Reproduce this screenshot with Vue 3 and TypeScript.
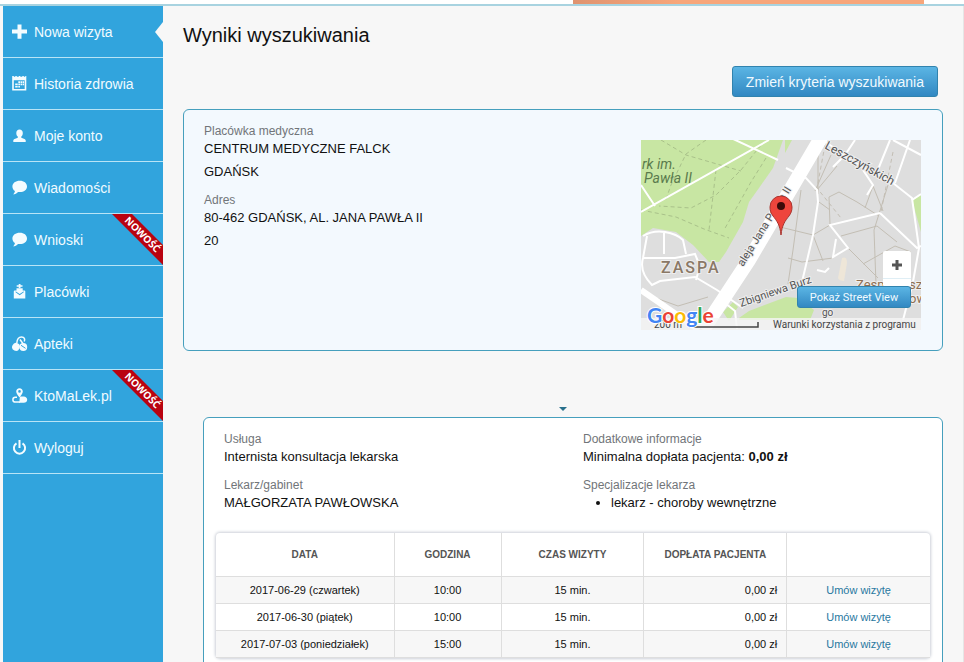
<script setup lang="ts">
interface MenuItem {
  label: string
  icon: string
  active?: boolean
  fresh?: boolean
}

interface Visit {
  date: string
  time: string
  length: string
  price: string
}

const menu: MenuItem[] = [
  { label: 'Nowa wizyta', icon: 'plus', active: true },
  { label: 'Historia zdrowia', icon: 'calendar' },
  { label: 'Moje konto', icon: 'user' },
  { label: 'Wiadomości', icon: 'bubble' },
  { label: 'Wnioski', icon: 'bubble', fresh: true },
  { label: 'Placówki', icon: 'clinic' },
  { label: 'Apteki', icon: 'pills' },
  { label: 'KtoMaLek.pl', icon: 'finder', fresh: true },
  { label: 'Wyloguj', icon: 'power' },
]

const visits: Visit[] = [
  { date: '2017-06-29 (czwartek)', time: '10:00', length: '15 min.', price: '0,00 zł' },
  { date: '2017-06-30 (piątek)', time: '10:00', length: '15 min.', price: '0,00 zł' },
  { date: '2017-07-03 (poniedziałek)', time: '15:00', length: '15 min.', price: '0,00 zł' },
]
</script>

<template>
  <div class="page">
    <div class="banner"><div class="banner-fill"></div></div>
    <div class="body">
      <nav class="sidebar">
        <a v-for="item in menu" :key="item.label" href="#" class="item">
          <svg class="icon" viewBox="0 0 16 16" aria-hidden="true">
            <path v-if="item.icon === 'plus'" d="M5.500.500h4v5.100H15v4H9.500v5.100h-4V9.600H0v-4h5.500z" />
            <g v-else-if="item.icon === 'calendar'">
              <path fill-rule="evenodd" d="M.2 0h1.600v.8h1.500V0h1.500v.8h2V0h1.500v.8h2V0h1.500v.8h1.500V0h1v14.500H.2zM1.800 4.300v8.700h10.900V4.300z" />
              <path d="M6.300 5.300H8v1.600H6.300zM8.500 5.300h1.600v1.600H8.500zM10.600 5.300h1.500v1.600h-1.500zM3.200 7.600h2.500v1.600H3.200zM6.300 7.600H8v1.600H6.300zM8.500 7.600h1.600v1.600H8.500zM10.600 7.600h1.500v1.600h-1.500zM3.200 10h2.500v1.600H3.200zM6.300 10H8v1.600H6.300z" />
            </g>
            <path v-else-if="item.icon === 'user'" d="M7.500 1.500c2 0 3.300 1.400 3.300 3.400 0 1.600-.6 2.900-1.500 3.700v1.200c1.700.6 3.800 1 4.400 2.500V14H1.300v-1.700c.6-1.500 2.900-1.900 4.500-2.500V8.600c-1-.8-1.500-2.100-1.500-3.700 0-2 1.300-3.400 3.200-3.400z" />
            <path v-else-if="item.icon === 'bubble'" d="M7.800.8c4.200 0 7.200 2.400 7.200 5.600s-3 5.700-7.200 5.700c-.6 0-1.200 0-1.800-.2-1.300 1.500-2.900 2.300-5 2.400 1.100-.9 1.800-2.100 1.900-3.400C1.300 9.900.4 8.300.4 6.400.4 3.200 3.600.8 7.800.8z" />
            <g v-else-if="item.icon === 'clinic'">
              <path d="M6.700 0h1.800v1.300h2v1.500h-2V4h-1.800V2.800h-2V1.300h2zM4.500 4.300h6.200V7H4.500z" />
              <path fill-rule="evenodd" d="M1.800 7.500c0-.5.4-.9.900-.9h9.700c.5 0 .9.400.9.900V14.600H1.800zM3.300 8l4.400 3.200L12 8l-.6-.6-3.700 2.700L3.900 7.400z" />
            </g>
            <g v-else-if="item.icon === 'pills'">
              <path class="line" d="M4.800 7C5.100 3.200 6.700.9 9.500.9c2.900 0 3.800 2.200 2.700 4.600M8 3.500 12 9" />
              <ellipse cx="4" cy="10.800" rx="3.800" ry="4" transform="rotate(25 4 10.800)" />
              <circle cx="11.300" cy="11" r="3.900" />
              <path class="cut" d="M9 9.300 13.500 12.300" />
            </g>
            <g v-else-if="item.icon === 'finder'">
              <path fill-rule="evenodd" d="M7.500.2c2 0 3.300 1.400 3.300 3.200 0 1.700-1.500 3.500-3.300 6.200-1.900-2.800-3.300-4.500-3.300-6.200C4.200 1.600 5.500.2 7.500.2zm0 1.900a1.300 1.300 0 1 0 0 2.600 1.300 1.300 0 0 0 0-2.600z" />
              <path class="line" d="M5 9.300H3.300a2.400 2.400 0 0 0 0 4.800H8" />
              <path d="M8.200 8.600h3.500c2 0 3.500 1.400 3.500 3.100 0 1.800-1.500 3.100-3.500 3.100H7c1-2 .2-4.200 1.200-6.200z" />
            </g>
            <g v-else>
              <path class="line heavy" d="M4.500 3.300a5.600 5.600 0 1 0 6 0" />
              <path d="M6.500 0h2v8h-2z" />
            </g>
          </svg>
          <span>{{ item.label }}</span>
          <span v-if="item.active" class="notch"></span>
          <svg v-if="item.fresh" class="ribbon" viewBox="0 0 51 51">
            <path d="M0 0h20l31 31v20z" fill="#b90310" />
            <text x="0" y="0" transform="translate(28 23) rotate(45)" text-anchor="middle">NOWOŚĆ</text>
          </svg>
        </a>
      </nav>

      <main class="content">
        <h1>Wyniki wyszukiwania</h1>
        <div class="toolbar"><button type="button" class="btn">Zmień kryteria wyszukiwania</button></div>

        <section class="card facility">
          <dl class="facts narrow">
            <div><dt>Placówka medyczna</dt><dd>CENTRUM MEDYCZNE FALCK GDAŃSK</dd></div>
            <div><dt>Adres</dt><dd>80-462 GDAŃSK, AL. JANA PAWŁA II 20</dd></div>
          </dl>
          <div class="map">
            <svg viewBox="0 0 280 190" class="map-art">
              <rect width="280" height="190" fill="#dedede" />
              <g fill="#c8e6a3">
                <path d="M0 0h142l-10 28-14 20-10 14-6 20-17 30-7 10-10 0-16-17-17-13-23-4-12 8z" />
                <path d="M144 0h7l-7 13zM280 55l-9 5 9 32zM82 172l10-10 5 5-9 14zM98 178l10-7 37-14 12 1 16 12-4 10H98z" />
              </g>
              <g fill="none" stroke="#a9c18a" stroke-dasharray="4 3">
                <path d="M20 0l25 15 55 16M65 0 45 14 30 45 24 62M120 5 100 30 75 55 50 68 18 66M75 30l-7 60M0 70l35 7 28 12 25 9M125 18 110 42 83 90" />
              </g>
              <g fill="none" stroke="#c3beb4">
                <path d="M177 12v42M190 15l-16 36M196 26l-20 24M189 85l-1-28 10-5 18 10 22 14M178 62l11 8M139 87l33 8 17-10M160 50l-8 60-5 34M172 95l10 26M147 118l14 4 31-4M200 96l36-10 20 16M247 45l-14 45 2 54M224 68l8-22 10 25M207 108l30 30M270 112l-16-6-32 18M12 157l25 9 30-9" />
                <path stroke-dasharray="4 3" d="M184 5 176 48 200 78M252 12 240 72" />
              </g>
              <g fill="none" stroke="#fff" stroke-width="2">
                <path d="M0 72 128 0M90-2 137 20M0 45 14 66" />
                <path d="M2 96q10-6 22-4t18 8l3 14M6 96 2 118q-4 14 9 27l8-4 35-4 22 13 26 18M2 118h32l20-4 5 12-4 14M23 92v22M84 163l10 8 2 18" />
                <path d="M145 28l20 10 11 12 1 12-5 33-11 47M176 130l8 2 4-4" />
                <path d="M182 0l32 23 38 20 19 15 7 50-6 34-10 38" />
                <path d="M214 0l-10 15-12 12M222 30l10 15-6 10M249 0l-13 32M269 0l-15 43M252 0l28 15M271 60l9-6" />
                <path d="M239 73l-50 12 18 23-15 9 3-18M239 73l37 35 4-2" />
              </g>
              <path d="M0 150l58 40" stroke="#fff" stroke-width="6" />
              <path d="M181-4 141 64 108 120 62 190" fill="none" stroke="#fff" stroke-width="14" />
              <path d="M201 118q5-2 5 5l-3 18q-5 0-6-3z" fill="#eee6d8" />
              <g class="street">
                <text transform="translate(102 127) rotate(-58)" font-size="11">aleja Jana Pawła II</text>
                <text transform="translate(183 8) rotate(29)" font-size="12">Leszczyńskich</text>
                <text transform="translate(100 167) rotate(-19)" font-size="11">Zbigniewa Burz</text>
                <text x="181" y="176" font-size="10">go</text>
              </g>
              <text class="park" x="1" y="29">rk im.</text>
              <text class="park" x="3" y="43">Pawła II</text>
              <text class="district" x="20" y="133">ZASPA</text>
              <g class="place">
                <text x="215" y="149">Zesp</text>
                <text x="268" y="149">sz</text>
                <text x="268" y="163">ow</text>
              </g>
              <path d="M140 95c-1-10-4-14-8-19-2-3-3-5-3-9a11 11 0 0 1 22 0c0 4-1 6-3 9-4 5-7 9-8 19z" fill="#ee453c" stroke="#a9352f" />
              <circle cx="140" cy="66" r="4" fill="#3b0a09" />
              <path d="M0 178h280v12H0z" fill="#f5f5f5" fill-opacity=".8" />
              <g class="legal">
                <text x="13" y="188">200 m</text>
                <text x="132" y="188">Warunki korzystania z programu</text>
              </g>
              <path d="M48 187h69v-5" fill="none" stroke="#444" stroke-width="1.500" />
              <text class="logo" x="6" y="183"><tspan fill="#4285f4">G</tspan><tspan fill="#ea4335">o</tspan><tspan fill="#fbbc05">o</tspan><tspan fill="#4285f4">g</tspan><tspan fill="#34a853">l</tspan><tspan fill="#ea4335">e</tspan></text>
            </svg>
            <button type="button" class="zoom-in" aria-label="+">
              <svg viewBox="0 0 12 12" aria-hidden="true"><path d="M6 1v10M1 6h10" /></svg>
            </button>
            <button type="button" class="street-view">Pokaż Street View</button>
          </div>
        </section>

        <div class="caret"></div>

        <section class="card results">
          <div class="info">
            <dl class="facts">
              <div><dt>Usługa</dt><dd>Internista konsultacja lekarska</dd></div>
              <div><dt>Lekarz/gabinet</dt><dd>MAŁGORZATA PAWŁOWSKA</dd></div>
            </dl>
            <dl class="facts">
              <div><dt>Dodatkowe informacje</dt><dd>Minimalna dopłata pacjenta: <b>0,00 zł</b></dd></div>
              <div><dt>Specjalizacje lekarza</dt><dd><ul><li>lekarz - choroby wewnętrzne</li></ul></dd></div>
            </dl>
          </div>
          <table>
            <colgroup><col class="c25"><col class="c15"><col class="c20"><col class="c20"><col class="c20"></colgroup>
            <thead>
              <tr><th>DATA</th><th>GODZINA</th><th>CZAS WIZYTY</th><th>DOPŁATA PACJENTA</th><th></th></tr>
            </thead>
            <tbody>
              <tr v-for="visit in visits" :key="visit.date">
                <td>{{ visit.date }}</td>
                <td>{{ visit.time }}</td>
                <td>{{ visit.length }}</td>
                <td class="price">{{ visit.price }}</td>
                <td><a href="#">Umów wizytę</a></td>
              </tr>
            </tbody>
          </table>
        </section>
      </main>
    </div>
  </div>
</template>

<style>
body {
  background: #f7f7f7;
}
</style>

<style scoped>
* {
  box-sizing: border-box;
}
.page {
  display: flex;
  flex-direction: column;
  height: 100vh;
  overflow: hidden;
  font-family: "Liberation Sans", Arial, sans-serif;
  color: #111;
}
.banner {
  flex: none;
  height: 6px;
  padding: 0 40px 0 573px;
  background: #fff;
  border-bottom: 2px solid #a8d3e0;
}
.banner-fill {
  height: 4px;
  background: linear-gradient(90deg, #df9370, #f7a67b 30%);
}
.body {
  flex: 1;
  display: flex;
  min-height: 0;
  padding-left: 3px;
}
.sidebar {
  flex: none;
  width: 160px;
  background: #31a4dd;
}
.item {
  position: relative;
  display: flex;
  align-items: center;
  gap: 6px;
  height: 52px;
  padding-left: 9px;
  border-bottom: 1px solid #b9e4f6;
  color: #f0fbff;
  font-size: 14px;
  line-height: 20px;
  text-decoration: none;
}
.icon {
  width: 16px;
  height: 16px;
  fill: #f4fcff;
}
.line {
  fill: none;
  stroke: #f4fcff;
  stroke-width: 1.5;
}
.heavy {
  stroke-width: 2;
}
.cut {
  fill: none;
  stroke: #31a4dd;
}
.notch {
  position: absolute;
  right: 0;
  top: 16px;
  border: solid transparent;
  border-width: 10px 8px 10px 0;
  border-right-color: #f7f7f7;
}
.ribbon {
  position: absolute;
  top: 0;
  right: 0;
  width: 51px;
  height: 51px;
}
.ribbon text {
  fill: #fff;
  font: bold 10px "Open Sans", sans-serif;
}
.content {
  flex: 1;
  min-width: 0;
  padding: 17px 20px 0;
  border-right: 1px solid #e6e6e6;
}
h1 {
  margin: 0;
  font-size: 20px;
  font-weight: normal;
  line-height: 24px;
}
.toolbar {
  display: flex;
  justify-content: flex-end;
  padding: 19px 5px 12px;
}
.btn,
.street-view {
  border: 1px solid #3183ae;
  border-radius: 3px;
  background: linear-gradient(#5bb5e4, #3288c2);
  color: #f0faff;
  cursor: pointer;
}
.btn {
  height: 31px;
  padding: 0 13px;
  font: 14px "Liberation Sans", Arial, sans-serif;
}
.card {
  border: 1px solid #469fbd;
  border-radius: 6px;
}
.facility {
  display: flex;
  justify-content: space-between;
  padding: 15px 21px 20px 20px;
  background: #f3f9fe;
}
.facts {
  display: flex;
  flex-direction: column;
  gap: 11px;
  margin: 0;
}
.narrow {
  width: 236px;
}
dt {
  color: #717579;
  font-size: 12px;
  line-height: 12px;
}
dd {
  margin: 0;
  font-size: 13px;
  line-height: 23px;
}
ul {
  margin: 0;
  padding-left: 28px;
}
.map {
  position: relative;
  width: 280px;
  height: 190px;
  margin-top: 15px;
}
.map-art {
  display: block;
  width: 280px;
  height: 190px;
  font-family: Roboto, sans-serif;
}
.street {
  fill: #555;
  stroke: #eee;
  stroke-width: 2px;
  paint-order: stroke;
}
.park {
  fill: #5a7a4d;
  font-size: 14px;
  font-style: italic;
}
.district {
  fill: #8a7866;
  stroke: #eee;
  stroke-width: 2px;
  paint-order: stroke;
  font-size: 16px;
  font-weight: 500;
  letter-spacing: 2px;
}
.place {
  fill: #8d6e52;
  stroke: #eee;
  stroke-width: 2px;
  paint-order: stroke;
  font-size: 13px;
}
.legal {
  fill: #444;
  font-size: 10px;
}
.logo {
  stroke: #fff;
  stroke-width: 2px;
  paint-order: stroke;
  font-family: Lato, sans-serif;
  font-size: 21px;
  font-weight: 700;
}
.zoom-in {
  position: absolute;
  right: 10px;
  bottom: 43px;
  width: 28px;
  height: 36px;
  padding: 8px 8px 16px;
  border: 0;
  border-radius: 2px;
  background: linear-gradient(#fff 27px, #dfeef5 27px, #dfeef5 28px, #fff 28px);
}
.zoom-in svg {
  display: block;
  width: 12px;
  height: 12px;
  fill: none;
  stroke: #555;
  stroke-width: 3;
}
.street-view {
  position: absolute;
  right: 10px;
  bottom: 22px;
  width: 114px;
  height: 22px;
  padding: 0;
  font: 11px Roboto, sans-serif;
}
.caret {
  width: 8px;
  height: 4px;
  margin: 56px auto 6px;
  border: solid transparent;
  border-width: 4px 4px 0;
  border-top-color: #28708c;
}
.results {
  margin-left: 20px;
  padding: 15px 12px 20px;
  background: #fff;
}
.info {
  display: grid;
  grid-template-columns: 1fr 1fr;
  column-gap: 20px;
  padding: 0 8px 19px;
}
table {
  width: 100%;
  table-layout: fixed;
  border-collapse: separate;
  border-spacing: 0;
  border-radius: 4px;
  box-shadow: 0 0 3px 1px #ccd0d8;
}
.c25 {
  width: 25%;
}
.c15 {
  width: 15%;
}
.c20 {
  width: 20%;
}
th {
  height: 44px;
  padding: 0;
  border-right: 1px solid #dedede;
  border-bottom: 1px solid #dedede;
  color: #555;
  font-size: 10px;
}
td {
  height: 27px;
  padding: 0 9px;
  border-right: 1px solid #dedede;
  border-bottom: 1px solid #dedede;
  font-size: 11px;
  line-height: 16px;
  text-align: center;
}
th:last-child,
td:last-child {
  border-right: 0;
}
tbody tr:nth-child(odd) {
  background: #f7f7f7;
}
td.price {
  text-align: right;
}
td a {
  color: #28789f;
  text-decoration: none;
}
</style>
